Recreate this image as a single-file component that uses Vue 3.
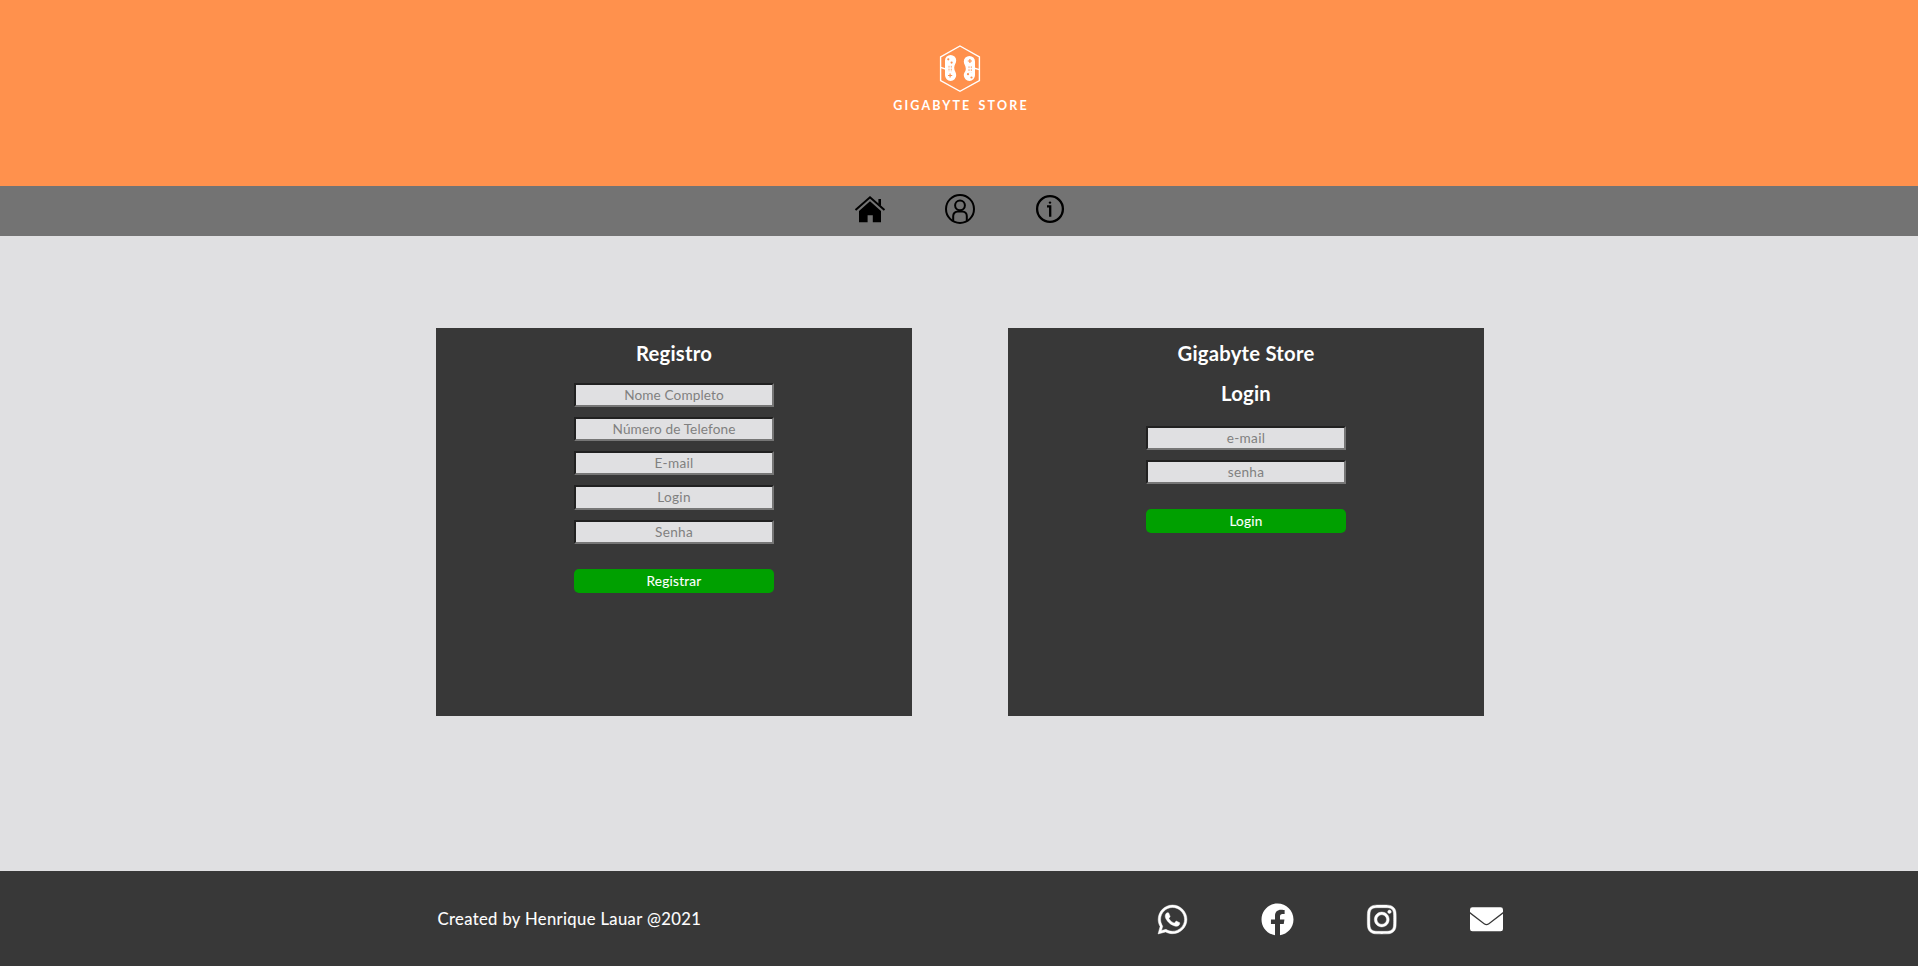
<script setup>
const registerFields = [
  { label: 'Nome Completo', type: 'text', cls: 'wide' },
  { label: 'Número de Telefone', type: 'tel', cls: 'wide' },
  { label: 'E-mail', type: 'email', cls: 'short' },
  { label: 'Login', type: 'text', cls: 'short' },
  { label: 'Senha', type: 'password', cls: 'short' },
]
const loginFields = [
  { label: 'e-mail', type: 'email', cls: 'short' },
  { label: 'senha', type: 'password', cls: 'short' },
]
const socials = [
  {
    name: 'WhatsApp',
    cls: 'outlined',
    box: '-32 0 512 512',
    d: 'M380.9 97.1C339 55.1 283.2 32 223.9 32c-122.4 0-222 99.6-222 222 0 39.1 10.2 77.3 29.6 111L0 480l117.7-30.9c32.4 17.7 68.9 27 106.1 27h.1c122.3 0 224.1-99.6 224.1-222 0-59.3-25.2-115-67.1-157zm-157 341.6c-33.2 0-65.7-8.9-94-25.7l-6.7-4-69.8 18.3L72 359.2l-4.4-7c-18.5-29.4-28.2-63.3-28.2-98.2 0-101.7 82.8-184.5 184.6-184.5 49.3 0 95.6 19.2 130.4 54.1 34.8 34.9 56.2 81.2 56.1 130.5 0 101.8-84.9 184.6-186.6 184.6zm101.2-138.2c-5.5-2.8-32.8-16.2-37.9-18-5.1-1.9-8.8-2.8-12.5 2.8-3.7 5.6-14.3 18-17.6 21.8-3.2 3.7-6.5 4.2-12 1.4-32.6-16.3-54-29.1-75.5-66-5.7-9.8 5.7-9.1 16.3-30.3 1.8-3.7.9-6.9-.5-9.7-1.4-2.8-12.5-30.1-17.1-41.2-4.5-10.8-9.1-9.3-12.5-9.5-3.2-.2-6.9-.2-10.6-.2-3.7 0-9.7 1.4-14.8 6.9-5.1 5.6-19.4 19-19.4 46.3 0 27.3 19.9 53.7 22.6 57.4 2.8 3.7 39.1 59.7 94.8 83.8 35.2 15.2 49 16.5 66.6 13.9 10.7-1.6 32.8-13.4 37.4-26.4 4.6-13 4.6-24.1 3.2-26.4-1.3-2.5-5-3.9-10.5-6.6z',
  },
  {
    name: 'Facebook',
    cls: 'solid',
    box: '0 0 512 512',
    d: 'M504 256C504 119 393 8 256 8S8 119 8 256c0 123.78 90.69 226.38 209.25 245V327.69h-63V256h63v-54.64c0-62.15 37-96.48 93.67-96.48 27.14 0 55.52 4.84 55.52 4.84v61h-31.28c-30.8 0-40.41 19.12-40.41 38.73V256h68.78l-11 71.69h-57.78V501C413.31 482.38 504 379.78 504 256z',
  },
  {
    name: 'Instagram',
    cls: 'outlined',
    box: '-36 0 512 512',
    d: 'M224.1 141c-63.6 0-114.9 51.3-114.9 114.9s51.3 114.9 114.9 114.9S339 319.5 339 255.9 287.7 141 224.1 141zm0 189.6c-41.1 0-74.7-33.5-74.7-74.7s33.5-74.7 74.7-74.7 74.7 33.5 74.7 74.7-33.6 74.7-74.7 74.7zm146.4-194.3c0 14.9-12 26.8-26.8 26.8-14.9 0-26.8-12-26.8-26.8s12-26.8 26.8-26.8 26.8 12 26.8 26.8zm76.1 27.2c-1.7-35.9-9.9-67.7-36.2-93.9-26.2-26.2-58-34.4-93.9-36.2-37-2.1-147.9-2.1-184.9 0-35.8 1.7-67.6 9.9-93.9 36.1s-34.4 58-36.2 93.9c-2.1 37-2.1 147.9 0 184.9 1.7 35.9 9.9 67.7 36.2 93.9s58 34.4 93.9 36.2c37 2.1 147.9 2.1 184.9 0 35.9-1.7 67.7-9.9 93.9-36.2 26.2-26.2 34.4-58 36.2-93.9 2.1-37 2.1-147.8 0-184.8zM398.8 388c-7.8 19.6-22.9 34.7-42.6 42.6-29.5 11.7-99.5 9-132.1 9s-102.7 2.6-132.1-9c-19.6-7.8-34.7-22.9-42.6-42.6-11.7-29.5-9-99.5-9-132.1s-2.6-102.7 9-132.1c7.8-19.6 22.9-34.7 42.6-42.6 29.5-11.7 99.5-9 132.1-9s102.7-2.6 132.1 9c19.6 7.8 34.7 22.9 42.6 42.6 11.7 29.5 9 99.5 9 132.1s2.7 102.7-9 132.1z',
  },
  {
    name: 'E-mail',
    cls: 'solid',
    box: '0 0 33 33',
    d: 'M2.400 4.300H30.600Q33 4.300 33 6.700V9L18.500 20.200Q16.500 21.600 14.500 20.200L0 9V6.700Q0 4.300 2.400 4.300ZM0 10.700 13.800 21.300Q16.500 23.200 19.200 21.300L33 10.700V26Q33 28.300 30.600 28.300H2.400Q0 28.300 0 26Z',
  },
]
</script>

<template>
  <div class="page">
    <header class="banner">
      <svg class="logo" viewBox="885 40 150 75" width="150" height="75">
        <g fill="none" stroke="#fff" stroke-width="1.4">
          <path d="M960 46 979.400 57V80.500L960 91.300 940.600 80.500V57Z" />
          <path d="M940.600 67.300 945.500 69M974.500 68.300 979.400 69.600" />
        </g>
        <g fill="#fff">
          <path d="M945 60.500a5.600 5.600 0 0 1 11.200 0c0 3-2 4-2 7.300s2 4.500 2 7.500a5.600 5.600 0 0 1-11.200 0Z" />
          <path d="M975 61.500a5.600 5.600 0 0 0-11.200 0c0 3 2 4 2 7.300s-2 3.500-2 6.500a5.600 5.600 0 0 0 11.200 0Z" />
        </g>
        <g fill="#ff914d">
          <circle cx="948.300" cy="59.300" r="1.100" />
          <circle cx="951.600" cy="62.600" r="1.100" />
          <circle cx="968" cy="74.200" r="1.100" />
          <circle cx="971.500" cy="77.500" r="1.100" />
        </g>
        <g fill="none" stroke="#ff914d">
          <path d="M948 75.500h4.200M950.100 73.400v4.200M967.800 61h4.200M969.900 58.900v4.200" stroke-width="1.200" />
          <path d="M949 65.800v6M951.300 65.800v6M969 66.300v6M971.300 66.300v6" stroke-width=".8" stroke-dasharray="1.800 1.100" />
        </g>
        <text x="893.300" y="109.600" textLength="76" lengthAdjust="spacing">GIGABYTE</text>
        <text x="978.600" y="109.600" textLength="48" lengthAdjust="spacing">STORE</text>
      </svg>
    </header>

    <nav class="menu">
      <a class="menu-item" aria-label="Início">
        <svg viewBox="0 0 32 32" width="32" height="32">
          <path d="M5 18 16 8.200 27 18v11.200h-8.200v-7h-5.200v7H5Z" />
          <path d="M1.500 17.100 16 4.300l14.500 12.800" fill="none" stroke="#000" stroke-width="2" />
          <path d="M24.400 5.900H27v7.200l-2.600-2.200Z" />
        </svg>
      </a>
      <a class="menu-item" aria-label="Conta">
        <svg viewBox="0 0 32 32" width="32" height="32" fill="none" stroke="#000" stroke-width="2">
          <circle cx="16" cy="16" r="14" />
          <circle cx="16" cy="12.300" r="4.900" />
          <path d="M9.200 28v-5a4.500 4.500 0 0 1 4.500-4.500h4.600a4.500 4.500 0 0 1 4.500 4.500V28" />
        </svg>
      </a>
      <a class="menu-item" aria-label="Sobre">
        <svg viewBox="0 0 32 32" width="32" height="32">
          <circle cx="16" cy="16" r="12.900" fill="none" stroke="#000" stroke-width="2.300" />
          <circle cx="16" cy="9.600" r="1.200" />
          <path d="M13 13.300h3.200v10.400" fill="none" stroke="#000" stroke-width="2.300" />
        </svg>
      </a>
    </nav>

    <main class="content">
      <form class="panel" @submit.prevent>
        <h3>Registro</h3>
        <div class="fields">
          <input v-for="f in registerFields" :key="f.label" :type="f.type" :placeholder="f.label" :class="f.cls" />
        </div>
        <button>Registrar</button>
      </form>
      <form class="panel" @submit.prevent>
        <h3>Gigabyte Store</h3>
        <h3 class="second">Login</h3>
        <div class="fields login-fields">
          <input v-for="f in loginFields" :key="f.label" :type="f.type" :placeholder="f.label" :class="f.cls" />
        </div>
        <button>Login</button>
      </form>
    </main>

    <footer class="foot">
      <p>Created by Henrique Lauar @2021</p>
      <div class="socials">
        <a v-for="s in socials" :key="s.name" :aria-label="s.name">
          <svg :class="s.cls" :viewBox="s.box" width="33" height="33"><path :d="s.d" /></svg>
        </a>
      </div>
    </footer>
  </div>
</template>

<style>
body {
  margin: 0;
  background: #e0e0e2;
}
</style>

<style scoped>
.page {
  display: flex;
  flex-direction: column;
  height: 966px;
  font-family: Lato, "Open Sans", sans-serif;
  color: #fff;
}
svg {
  display: block;
}
.banner {
  height: 186px;
  background: #ff914d;
  display: flex;
  justify-content: center;
}
.logo {
  margin-top: 40px;
  margin-left: 2px;
}
.logo text {
  font: 700 12.500px Lato, sans-serif;
  fill: #fff;
}
.menu {
  height: 50px;
  background: #737373;
  display: flex;
  justify-content: center;
  gap: 58px;
  padding-left: 2px;
}
.menu-item {
  margin-top: 7px;
}
.content {
  flex: 1;
  display: flex;
  justify-content: center;
  align-items: flex-start;
  gap: 96px;
  padding-top: 92px;
  padding-left: 2px;
}
.panel {
  width: 476px;
  height: 388px;
  background: #383838;
  display: flex;
  flex-direction: column;
  align-items: center;
}
h3 {
  margin: 13px 0 0;
  font-size: 20.250px;
  line-height: 25px;
  font-weight: 700;
  letter-spacing: 0.230px;
}
h3.second {
  margin-top: 15px;
}
.fields {
  display: flex;
  flex-direction: column;
  gap: 10px;
  margin-top: 16.500px;
}
.login-fields {
  margin-top: 19.600px;
}
input,
button {
  box-sizing: border-box;
  width: 200px;
  height: 24.250px;
  padding: 1px 2px;
  font: 400 13.600px Lato, "Open Sans", sans-serif;
  text-align: center;
}
input {
  border: 2px solid;
  border-color: #212121 #767676 #767676 #212121;
  border-radius: 0;
  background: #e0e0e2;
}
input.wide {
  letter-spacing: 0.120px;
}
input.short {
  letter-spacing: 0.300px;
}
input::placeholder {
  color: #808080;
}
button {
  margin-top: 25px;
  border: 0;
  border-radius: 5px;
  background: #00a000;
  color: #fff;
  letter-spacing: 0.220px;
  -webkit-text-stroke: 0.100px #fff;
}
.foot {
  height: 95px;
  background: #383838;
  display: flex;
  align-items: center;
}
.foot p {
  margin: 1px 0 0 437.500px;
  width: 682.500px;
  font-size: 16.600px;
  letter-spacing: 0.380px;
  -webkit-text-stroke: 0.100px #fff;
}
.socials {
  display: grid;
  grid-template-columns: repeat(4, 104.750px);
  justify-items: center;
  padding-top: 1px;
}
.socials svg {
  fill: #fff;
}
.socials .outlined {
  stroke: #fff;
  stroke-width: 7;
}
</style>
